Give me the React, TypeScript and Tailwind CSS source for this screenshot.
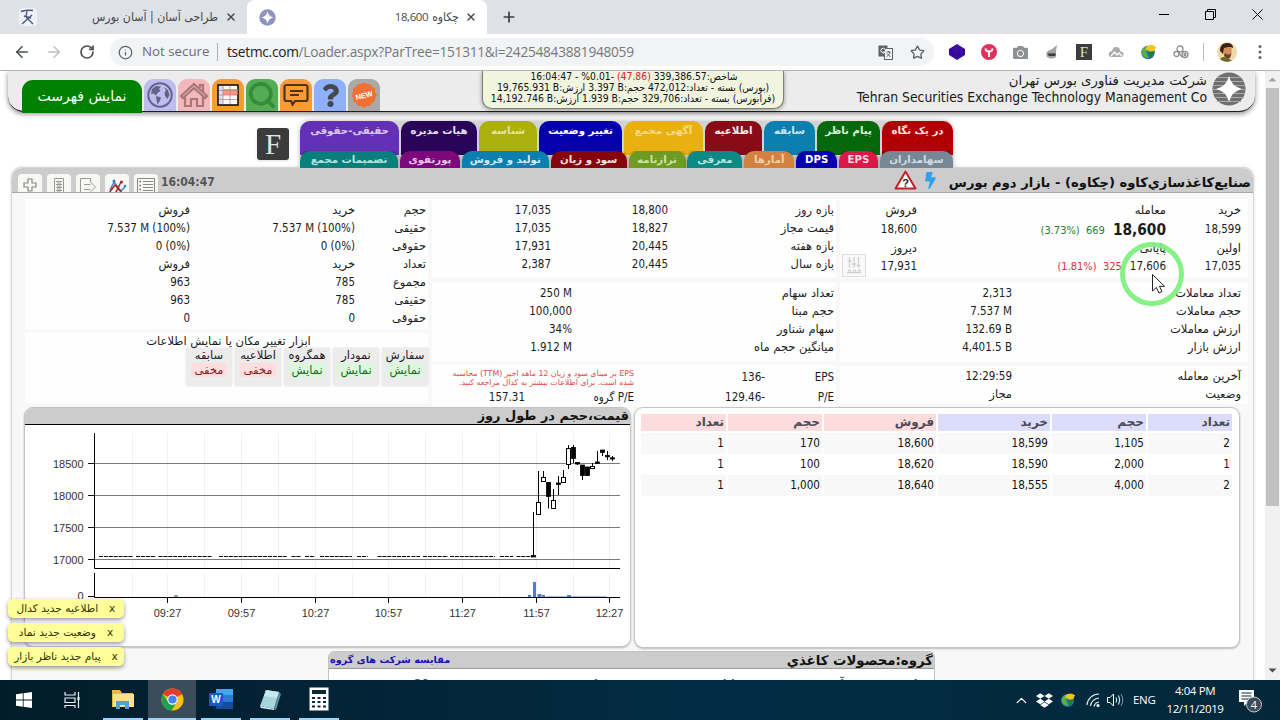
import React from "react";
import { FaGlobeAmericas, FaQuestion, FaDropbox, FaCamera, FaBolt } from "react-icons/fa";
import { ArrowLeft, ArrowRight, RotateCw, Info, Star, Plus, X, Search, ChevronUp } from "lucide-react";

const PAGE = "font-['DejaVu_Sans_Condensed','DejaVu_Sans',sans-serif] [font-stretch:condensed]";
const FA = "font-['DejaVu_Sans',sans-serif] [font-stretch:normal]";
const UI = "font-['Open_Sans','DejaVu_Sans',sans-serif]";

/* ---------- browser chrome ---------- */

function TabStrip() {
  return (
    <div className="flex h-[34px] shrink-0 items-stretch bg-[#dee1e6]">
      <div className="flex w-[247px] items-center pl-[19px] pr-[10px]">
        <svg width="18" height="18" viewBox="0 0 18 18">
          <rect width="18" height="18" rx="4" fill="#eef1f6" />
          <path d="M2 3.500C7 2 11 2 14 2.500M8 3L7 9M13 7L3 16M7 9L14 16M5 8L12 10" fill="none" stroke="#4a5a80" strokeWidth="1.400" />
        </svg>
        <div dir="rtl" className="ml-auto mr-[7px] text-[12.200px] text-[#45494d] font-['DejaVu_Sans_Condensed','DejaVu_Sans',sans-serif] [font-stretch:condensed]">
          طراحی آسان | آسان بورس
        </div>
        <X size={12} strokeWidth={3} color="#45494d" className="shrink-0" />
      </div>
      <div className="flex w-[240px] items-center rounded-t-[8px] bg-white pl-[12px] pr-[10px]">
        <svg width="17" height="17" viewBox="0 0 17 17">
          <circle cx="8.500" cy="8.500" r="8.200" fill="#8e93c0" />
          <path d="M8.500 2.500Q9.500 7.500 14.500 8.500Q9.500 9.500 8.500 14.500Q7.500 9.500 2.500 8.500Q7.500 7.500 8.500 2.500Z" fill="#fff" />
        </svg>
        <div className="ml-auto mr-[6px] flex items-center gap-1 text-[12px] text-[#45494d]">
          <span className="font-['Open_Sans',sans-serif] text-[11.500px] tracking-[-0.4px]">18,600</span>
          <span className="font-['DejaVu_Sans_Condensed','DejaVu_Sans',sans-serif] [font-stretch:condensed]">چکاوه</span>
        </div>
        <X size={12} strokeWidth={3} color="#45494d" className="shrink-0" />
      </div>
      <div className="flex w-[44px] items-center justify-center">
        <Plus size={16} strokeWidth={2.6} color="#3c4043" />
      </div>
      <div className="ml-auto flex items-center gap-[36px] pb-[5px] pr-[17px]">
        <svg width="10" height="11" viewBox="0 0 10 11"><path d="M0 5.500H10" stroke="#000" /></svg>
        <svg width="11" height="11" viewBox="0 0 11 11" fill="none" stroke="#000">
          <path d="M0.500 2.500H8.500V10.500H0.500ZM2.500 2.500V0.500H10.500V8.500H8.500" />
        </svg>
        <svg width="11" height="11" viewBox="0 0 11 11"><path d="M0.500 0.500L10.500 10.500M10.500 0.500L0.500 10.500" stroke="#000" /></svg>
      </div>
    </div>
  );
}

function Toolbar() {
  return (
    <div className="flex h-[36px] shrink-0 items-center bg-white">
      <div className="flex w-[110px] items-center gap-[14px] pl-[13px]">
        <ArrowLeft size={18} strokeWidth={2.2} color="#4d5156" />
        <ArrowRight size={18} strokeWidth={2} color="#bcbfc3" />
        <RotateCw size={16} strokeWidth={2.6} color="#4d5156" className="ml-[2px]" />
      </div>
      <div className={`flex h-[28px] w-[824px] items-center rounded-full bg-[#f1f3f4] pl-[8px] pr-[8px] text-[14px] ${UI}`}>
        <Info size={15} color="#5f6368" />
        <span className="ml-[9px] w-[75px] whitespace-nowrap text-[13.300px] text-[#6a6e73]">Not secure</span>
        <span className="h-[18px] w-px bg-[#a9adb1]" />
        <span className="ml-[9px] whitespace-nowrap text-[13.700px] tracking-[-0.27px] text-[#202124]">
          tsetmc.com<span className="text-[#74787c]">/Loader.aspx?ParTree=151311&amp;i=24254843881948059</span>
        </span>
        <svg className="ml-auto" width="15" height="15" viewBox="0 0 15 15">
          <rect x="0.500" y="0.500" width="9" height="11" fill="#5f6368" />
          <rect x="6.500" y="3.500" width="8" height="11" fill="#f1f3f4" stroke="#5f6368" />
          <path d="M7 4.200A2.300 2.300 0 1 0 7 7H5" stroke="#fff" fill="none" />
          <path d="M8.500 7H12.500M10.500 6V7M12 7C11.500 9.500 10 10.500 8.500 11.500M9 8.500L12.500 12" stroke="#5f6368" fill="none" />
        </svg>
        <Star size={15} color="#5f6368" strokeWidth={2.2} className="ml-[17px] mr-[1px]" />
      </div>
      <div className="ml-[15px] flex items-center">
        <div className="flex items-center gap-[16px]">
          <svg width="16" height="16" viewBox="0 0 16 16"><path d="M8 0L16 5V11L8 16L0 11V5Z" fill="#3c0ca3" /><path d="M0 5L8 10L16 5M0 8L8 13L16 8" stroke="#23087c" fill="none" strokeWidth="0.800" /></svg>
          <svg width="16" height="16" viewBox="0 0 16 16"><circle cx="8" cy="8" r="8" fill="#e0315e" /><path d="M4.500 4.500Q4.500 7.500 8 7.500Q11.500 7.500 11.500 4.500M8 7.500V13" stroke="#fff" strokeWidth="1.800" fill="none" /></svg>
          <FaCamera size={15} color="#8f9295" />
          <svg width="16" height="16" viewBox="0 0 16 16"><path d="M13 1L8 5L4 7Q1 9 3 13Q8 16 12 13L12 7Z" fill="#a3a3a3" /><path d="M3.500 9.500H12L11 12H5Z" fill="#3c3c3c" /></svg>
          <span className="flex h-[16px] w-[16px] items-center justify-center bg-[#3d3d3d] text-[15px] leading-none text-[#ddd] font-['Liberation_Serif',serif]">F</span>
          <svg width="16" height="12" viewBox="0 0 16 12"><path d="M3 11Q0 10 1 7Q2 5 4 5Q5 1 8 1Q12 1 12 5Q16 6 15.500 9Q15 11 13 11Z" fill="#aaa" /><path d="M3 10L6.500 6L9 9L11 7L14 10" fill="none" stroke="#fff" strokeWidth="1.400" /></svg>
          <svg width="17" height="16" viewBox="0 0 17 16"><circle cx="8" cy="8.500" r="6.800" fill="#2773c4" /><path d="M2 6Q5 1 9 3L6 8L9 14Q2 14 1.500 8Z" fill="#58b33a" /><path d="M6 3Q11 -1 16 3L13 9L11 10L9 7L6 6Z" fill="#f0c419" /><path d="M8 8L15 7L10.500 15Z" fill="#1e7d2f" /></svg>
          <svg width="16" height="14" viewBox="0 0 16 14" fill="none" stroke="#8f8f8f" strokeWidth="1.300"><circle cx="7" cy="4" r="3" /><circle cx="3.500" cy="9" r="2.500" /><circle cx="12" cy="9.500" r="3" /><circle cx="12" cy="9.500" r="1" /><path d="M5 7L9 12" /></svg>
        </div>
        <span className="ml-[14px] h-[18px] w-px bg-[#babdc0]" />
        <svg className="ml-[13px]" width="20" height="20" viewBox="0 0 20 20">
          <clipPath id="avatar"><circle cx="10" cy="10" r="10" /></clipPath>
          <g clipPath="url(#avatar)">
            <rect width="20" height="20" fill="#efd9a6" />
            <path d="M3 9Q3 1 10 1Q16 1 16 6L13 5L8 6L6 12Z" fill="#3a2418" />
            <path d="M7 6L14.500 5V11Q14 16 11 16Q8 15 6 11Z" fill="#d58e5c" />
            <path d="M8 11Q11 14 14.500 11L13 16Q10 18 7 14Z" fill="#6b3f26" />
            <path d="M2 20Q3 15 7 15L12 17Q15 18 16 20Z" fill="#6b6a2a" />
          </g>
        </svg>
        <svg className="ml-[21px]" width="4" height="16" viewBox="0 0 4 16" fill="#5f6368"><circle cx="2" cy="2.500" r="1.500" /><circle cx="2" cy="8" r="1.500" /><circle cx="2" cy="13.500" r="1.500" /></svg>
      </div>
    </div>
  );
}

/* ---------- site header ---------- */

function MenuIcon({ bg, children }: { bg: string; children: React.ReactNode }) {
  return <div className={`flex h-[32px] w-[32px] items-center justify-center rounded-t-[9px] ${bg}`}>{children}</div>;
}

function SiteHeader() {
  return (
    <header className="mx-[8px] flex h-[41px] w-[1247px] shrink-0 rounded-b-[16px] border-b border-[#1d1d1d] bg-[#ececec] shadow-[0_2px_5px_rgba(0,0,0,0.45)]">
      <div className="flex items-end gap-[2px] pl-[14px]">
        <div className={`-mb-[2px] flex h-[33px] w-[120px] items-center justify-center rounded-t-[11px] bg-[#008000] text-[14px] text-white ${FA}`}>نمایش فهرست</div>
        <MenuIcon bg="bg-[#bdbdf0]">
          <svg width="26" height="26" viewBox="0 0 26 26">
            <circle cx="13" cy="13" r="11.700" fill="none" stroke="#63638a" strokeWidth="2" />
            <path d="M5 7L9 4L14 4.500L12 7L13.500 9L10.500 11L9 13.500L6.500 11.500L4 12ZM9 14L14 15.500L13 18.500L10.500 22.500L9.500 18ZM17 5L21 8L22.500 13L20.500 17L18 14L17.500 10.500L19 8.500Z" fill="#63638a" />
          </svg>
        </MenuIcon>
        <MenuIcon bg="bg-[#f2b8bb]">
          <svg width="30" height="28" viewBox="0 0 30 28" fill="none" stroke="#aa7777" strokeWidth="2.200">
            <path d="M2 15L15 3L28 15L26 17L15 7L4 17ZM21 7V4H24V11M6 16V25H12V18H18V25H24V16" />
          </svg>
        </MenuIcon>
        <MenuIcon bg="bg-[#fb9a33]">
          <svg width="22" height="22" viewBox="0 0 22 22"><rect x="1" y="1" width="20" height="20" fill="#fbf8f8" stroke="#111" strokeWidth="1.600" /><path d="M2 2H6V20H2Z" fill="#dcdcf0" /><rect x="6" y="5" width="14.500" height="6" fill="#f9967c" /><path d="M2 6.500H20M2 11H20M2 15.500H20M6 2V20M13 2V20" stroke="#b58a8a" strokeWidth="0.800" /></svg>
        </MenuIcon>
        <MenuIcon bg="bg-[#52ad55]"><Search size={30} strokeWidth={3} color="#388a3c" /></MenuIcon>
        <MenuIcon bg="bg-[#fb9a33]">
          <svg width="26" height="24" viewBox="0 0 26 24" fill="none" stroke="#4d3418" strokeWidth="2.200"><path d="M3.500 2H22.500Q24.500 2 24.500 4V16Q24.500 18 22.500 18H12L9.500 21.500L8 18H3.500Q1.500 18 1.500 16V4Q1.500 2 3.500 2ZM7 8H20M7 12H16" /></svg>
        </MenuIcon>
        <MenuIcon bg="bg-[#8fb0fa]"><FaQuestion size={23} color="#44484f" /></MenuIcon>
        <MenuIcon bg="bg-[#aaa9a7]">
          <svg width="28" height="28" viewBox="0 0 28 28">
            <path d="M14 1.500L17 3L20 3L22 5.500L25 7.500L25 11L27 14L25 17L25 20L22 22L20 25L17 25L14 27L11 25L8 25L6 22L3 20L3 17L1.500 14L3 11L3 7.500L6 5.500L8 3L11 3Z" fill="#ee7135" />
            <text x="14" y="17" fontSize="7.500" fontWeight="bold" fill="#fff" textAnchor="middle" transform="rotate(-14 14 14)" fontFamily="Liberation Sans, sans-serif">NEW</text>
          </svg>
        </MenuIcon>
      </div>
      <div dir="rtl" className="ml-[102px] h-[38px] w-[302px] whitespace-nowrap rounded-b-[10px] border border-t-0 border-[#7e7f6c] bg-[#f1f4de] text-center text-[10.300px] leading-[11px] text-[#111] shadow-[0_1px_4px_rgba(0,0,0,0.4)]">
        <div className="pl-[2px]">شاخص:<bdi dir="ltr">339,386.57</bdi> <bdi dir="ltr" className="text-[#d8202c]">(47.86)</bdi> <bdi dir="ltr">16:04:47 - %0.01-</bdi></div>
        <div>(بورس) بسته - تعداد:472,012 حجم:<bdi>3.397 B</bdi> ارزش:<bdi>19,765.931 B</bdi></div>
        <div>(فرابورس) بسته - تعداد:329,706 حجم:<bdi>1.939 B</bdi> ارزش:<bdi>14,192.746 B</bdi></div>
      </div>
      <div className="ml-auto mr-[9px] flex gap-[5px]">
        <div className="whitespace-nowrap text-right text-[#1a1a1a]">
          <div dir="rtl" className={`h-[18px] text-[13.300px] leading-[19px] ${FA}`}>شرکت مدیریت فناوری بورس تهران</div>
          <div className="text-[13.800px] leading-[17px]">Tehran Securities Exchange Technology Management Co</div>
        </div>
        <svg className="mt-px" width="34" height="34" viewBox="0 0 34 34">
          <circle cx="17" cy="17" r="16.500" fill="#6f6f6f" />
          <path d="M5 5.500H29M2 9.500H32M1 13.500H33M0 17.500H34M1 21.500H33M2 25.500H32M5 29.500H29" stroke="#a9a9a9" strokeWidth="1.200" />
          <path d="M17 4Q19.500 14.500 30 17Q19.500 19.500 17 30Q14.500 19.500 4 17Q14.500 14.500 17 4Z" fill="#fff" />
        </svg>
      </div>
    </header>
  );
}

/* ---------- section tabs ---------- */

const TOP_TABS = [
  ["w-[99px] bg-[#6430b8] text-[#d8c8f0]", "حقیقی-حقوقی"],
  ["w-[76px] bg-[#2a0459] text-[#e6e0ee]", "هیات مدیره"],
  ["w-[58px] bg-[#adaf0a] text-[#e4e4a2]", "شناسه"],
  ["w-[83px] bg-[#0500ad] text-white", "تغییر وضعیت"],
  ["w-[79px] bg-[#e9b011] text-[#f6da87]", "آگهی مجمع"],
  ["w-[57px] bg-[#8b0a18] text-[#f8e8e8]", "اطلاعیه"],
  ["w-[51px] bg-[#0b80b0] text-[#c6e6f3]", "سابقه"],
  ["w-[63px] bg-[#06680a] text-[#dcf0d8]", "پیام ناظر"],
  ["w-[71px] bg-[#b10005] text-[#ffe3e0]", "در یک نگاه"],
];
const LOW_TABS = [
  ["w-[98px] bg-[#087f7c] text-[#b5e2dd]", "تصمیمات مجمع"],
  ["w-[60px] bg-[#7c087c] text-[#e8c0e8]", "پورتفوی"],
  ["w-[87px] bg-[#0b80b0] text-[#cfeaf5]", "تولید و فروش"],
  ["w-[76px] bg-[#86040c] text-[#f7e0e0]", "سود و زیان"],
  ["w-[57px] bg-[#6e9c22] text-[#cfe2a8]", "ترازنامه"],
  ["w-[55px] bg-[#0c8985] text-[#b8e2de]", "معرفی"],
  ["w-[50px] bg-[#d2813f] text-[#f3cfa8]", "آمارها"],
  ["w-[41px] bg-[#0500ad] text-white", "DPS"],
  ["w-[39px] bg-[#dd1748] text-[#ffd9e0]", "EPS"],
  ["w-[73px] bg-[#768896] text-[#d2dbe0]", "سهامداران"],
];

function SectionTabs() {
  return (
    <div className="flex h-[56px] shrink-0 pl-[257px] pt-[9px]">
      <div className="mt-[7px] flex h-[32px] w-[32px] items-center justify-center rounded-[3px] bg-[#3b3b3b] text-[29px] leading-none text-[#e2e2e2] shadow font-['Liberation_Serif',serif]">F</div>
      <div className={`ml-[11px] w-[653px] rounded-t-[10px] bg-[#d3d3d3] text-[10.200px] font-bold shadow-[0_0_5px_rgba(0,0,0,0.3)] ${FA}`}>
        <div className="flex h-[30px] justify-between">
          {TOP_TABS.map(([c, t]) => (
            <div key={t} className={`flex h-[34px] justify-center whitespace-nowrap rounded-t-[10px] pt-[2px] leading-[16px] ${c}`}>{t}</div>
          ))}
        </div>
        <div className="flex h-[17px] justify-between overflow-hidden">
          {LOW_TABS.map(([c, t]) => (
            <div key={t} className={`relative flex h-[24px] justify-center whitespace-nowrap rounded-t-[10px] pt-[1px] leading-[16px] shadow-[0_-1px_3px_rgba(0,0,0,0.3)] ${c}`}>{t}</div>
          ))}
        </div>
      </div>
    </div>
  );
}

/* ---------- title bar of the symbol ---------- */

function ToolButton({ children }: { children: React.ReactNode }) {
  return (
    <div className="flex h-[18px] w-[24px] items-start justify-center overflow-hidden rounded-t-[4px] bg-[#f7f7f4] pt-[4px]">
      <svg width="20" height="18" viewBox="0 0 20 18" fill="none">{children}</svg>
    </div>
  );
}

function TitleBar() {
  return (
    <div className="flex h-[25px] shrink-0 rounded-t-[10px] border-b border-[#a9a9a9] bg-[#cccccc] pl-[6px] pr-[2px]">
      <div className="flex items-end gap-[5px]">
        <ToolButton><path d="M8 1H12V5H16V9H12V13H8V9H4V5H8Z" stroke="#888" strokeWidth="1.200" /></ToolButton>
        <ToolButton><path d="M5.500 0.500H14.500V17M5.500 0.500V17M7 3.500H13M7 6.500H13M7 9.500H13M7 12.500H13M9 3V17M11 3V17" stroke="#999" /></ToolButton>
        <ToolButton><path d="M2.500 0.500H12.500V4L17.500 9L12.500 14M2.500 0.500V17M6 6.500H12.500M6 11.500H12.500" stroke="#999" /></ToolButton>
        <ToolButton>
          <path d="M3 12L7 4L14 13L18 9" stroke="#347fc0" strokeWidth="1.400" /><path d="M2 15L8 7L15 15M8 16L14 4" stroke="#b52026" strokeWidth="1.500" />
          <circle cx="7" cy="3" r="1.500" fill="#347fc0" /><circle cx="14.500" cy="4" r="1.500" fill="#b52026" /><circle cx="18" cy="8" r="1.300" fill="#347fc0" />
        </ToolButton>
        <ToolButton><path d="M1.500 0.500H18.500V17M1.500 0.500V17M7 3.500H17M7 6.500H17M7 9.500H17M7 12.500H17" stroke="#888" /><path d="M3.500 3.500H5M3.500 7.500H5M3.500 11.500H5" stroke="#666" strokeWidth="1.600" /></ToolButton>
      </div>
      <div className="ml-[3px] mt-[7px] text-[12px] font-bold leading-[15px] text-[#555]">16:04:47</div>
      <div className="ml-auto flex">
        <svg className="mt-[2px]" width="23" height="20" viewBox="0 0 23 20"><path d="M11.500 1.500L21.500 18.500H1.500Z" fill="#fff" stroke="#c41c28" strokeWidth="2" strokeLinejoin="round" /><text x="11.500" y="16.500" fontSize="11" fontWeight="bold" textAnchor="middle" fill="#222" fontFamily="Liberation Sans, sans-serif">?</text></svg>
        <FaBolt size={17} color="#31a0f2" className="ml-[5px] mt-[4px]" />
        <div dir="rtl" className={`ml-[10px] mt-[6px] whitespace-nowrap text-[13.100px] font-bold leading-[18px] text-[#111] ${FA}`}>صنایع‌کاغذسازي‌کاوه (چکاوه) - بازار دوم بورس</div>
      </div>
    </div>
  );
}

/* ---------- data boxes (right to left) ---------- */

const CARD = "bg-[#fefefe] whitespace-nowrap";
const isPersian = (c: React.ReactNode) => typeof c === "string" && /[\u0600-\u06ff]/.test(c);

function Cols({ cols, h, cells }: { cols: string; h: string; cells: React.ReactNode[] }) {
  return (
    <div className={`grid items-center ${h} ${cols}`}>
      {cells.map((c, i) => (
        <div key={i} className={isPersian(c) ? `text-right ${FA}` : "text-right"}><bdi>{c}</bdi></div>
      ))}
    </div>
  );
}

function QuoteColumn() {
  const quote = "grid-cols-[75px_249px_1fr]";
  const totals = "grid-cols-[229px_1fr]";
  return (
    <div className="flex w-[408px] flex-col gap-[4px]">
      <div className={`${CARD} relative h-[79px] pr-[7px] pt-[3px]`}>
        <Cols cols={quote} h="h-[18px]" cells={["خرید", "معامله", "فروش"]} />
        <Cols
          cols={quote}
          h="h-[20px]"
          cells={[
            "18,599",
            <span dir="ltr" className="inline-flex items-center align-top">
              <span className="pt-[2px] text-[11px] text-[#2b7a35]">(3.73%)&nbsp; 669</span>
              <b className="ml-[8px] text-[15.300px] leading-[18px]">18,600</b>
            </span>,
            "18,600",
          ]}
        />
        <Cols cols={quote} h="h-[18px]" cells={["اولین", "پایانی", "دیروز"]} />
        <Cols
          cols={quote}
          h="h-[18px]"
          cells={[
            "17,035",
            <span dir="ltr"><span className="mr-[8px] text-[11px] text-[#e1303a]">(1.81%)&nbsp; 325</span>17,606</span>,
            "17,931",
          ]}
        />
        <div className="absolute left-[2px] top-[55px] flex h-[23px] w-[24px] items-center justify-center border border-[#dcdcdc] bg-[#fafafa]">
          <svg width="16" height="17" viewBox="0 0 16 17" fill="none" stroke="#cfcfcf"><path d="M3.500 0V11M8 0V11M12.500 0V11M1.500 4H5.500M6 7H10M10.500 8.500H14.500M2 13.500H5M7 13.500H10M12 13.500H15M1 15.500H15" strokeWidth="1.300" /></svg>
        </div>
      </div>
      <div className={`${CARD} h-[80px] pr-[7px] pt-[3px]`}>
        <Cols cols={totals} h="h-[18px]" cells={["تعداد معاملات", "2,313"]} />
        <Cols cols={totals} h="h-[18px]" cells={["حجم معاملات", "7.537 M"]} />
        <Cols cols={totals} h="h-[18px]" cells={["ارزش معاملات", "132.69 B"]} />
        <Cols cols={totals} h="h-[18px]" cells={["ارزش بازار", "4,401.5 B"]} />
      </div>
      <div className={`${CARD} h-[38px] pr-[7px] pt-[1px]`}>
        <Cols cols={totals} h="h-[19px]" cells={["آخرین معامله", "12:29:59"]} />
        <Cols cols={totals} h="h-[17px]" cells={["وضعیت", "مجاز"]} />
      </div>
    </div>
  );
}

function RangeColumn() {
  const range = "grid-cols-[166px_117px_1fr]";
  const shares = "grid-cols-[262px_1fr]";
  return (
    <div className="flex w-[404px] flex-col gap-[4px]">
      <div className={`${CARD} h-[79px] pr-[2px] pt-[3px]`}>
        <Cols cols={range} h="h-[18px]" cells={["بازه روز", "18,800", "17,035"]} />
        <Cols cols={range} h="h-[18px]" cells={["قیمت مجاز", "18,827", "17,035"]} />
        <Cols cols={range} h="h-[18px]" cells={["بازه هفته", "20,445", "17,931"]} />
        <Cols cols={range} h="h-[18px]" cells={["بازه سال", "20,445", "2,387"]} />
      </div>
      <div className={`${CARD} h-[80px] pr-[2px] pt-[3px]`}>
        <Cols cols={shares} h="h-[18px]" cells={["تعداد سهام", "250 M"]} />
        <Cols cols={shares} h="h-[18px]" cells={["حجم مبنا", "100,000"]} />
        <Cols cols={shares} h="h-[18px]" cells={["سهام شناور", "34%"]} />
        <Cols cols={shares} h="h-[18px]" cells={["میانگین حجم ماه", "1.912 M"]} />
      </div>
      <div className={`${CARD} h-[42px] pr-[2px] pt-[3px]`}>
        <div className="grid h-[20px] grid-cols-[69px_131px_1fr] items-center">
          <span>EPS</span>
          <span dir="ltr" className="text-right">136-</span>
          <span className={`text-[7.850px] leading-[9px] text-[#e04a4a] ${FA}`}>
            EPS بر مبنای سود و زیان 12 ماهه اخیر (TTM) محاسبه<br />شده است. برای اطلاعات بیشتر به کدال مراجعه کنید.
          </span>
        </div>
        <div className="grid h-[20px] grid-cols-[69px_131px_109px_1fr] items-center">
          <span>P/E</span>
          <span dir="ltr" className="text-right">129.46-</span>
          <span>P/E گروه</span>
          <span>157.31</span>
        </div>
      </div>
    </div>
  );
}

const TOOLS = [
  ["سفارش", "نمایش", "bg-[#dcf8dc] text-[#1d6a24]"],
  ["نمودار", "نمایش", "bg-[#dcf8dc] text-[#1d6a24]"],
  ["همگروه", "نمایش", "bg-[#dcf8dc] text-[#1d6a24]"],
  ["اطلاعیه", "مخفی", "bg-[#fddede] text-[#8b1f22]"],
  ["سابقه", "مخفی", "bg-[#fddede] text-[#8b1f22]"],
];

function ClientColumn() {
  const cols = "grid-cols-[71px_165px_1fr]";
  const rows = [
    ["حجم", "خرید", "فروش"],
    ["حقیقی", "7.537 M (100%)", "7.537 M (100%)"],
    ["حقوقی", "0 (0%)", "0 (0%)"],
    ["تعداد", "خرید", "فروش"],
    ["مجموع", "785", "963"],
    ["حقیقی", "785", "963"],
    ["حقوقی", "0", "0"],
  ];
  return (
    <div className="flex w-[403px] flex-col gap-[4px]">
      <div className={`${CARD} h-[130px] pr-[2px] pt-[3px]`}>
        {rows.map((r, i) => (
          <Cols key={i} cols={cols} h="h-[18px]" cells={r.map((c) => (isPersian(c) ? c : <span dir="ltr">{c}</span>))} />
        ))}
      </div>
      <div className={`${CARD} h-[70px] ${FA}`}>
        <div className="h-[15px] pl-[4px] text-center leading-[16px]">ابزار تغییر مکان یا نمایش اطلاعات</div>
        <div className="flex gap-[3px]">
          {TOOLS.map(([a, b, c]) => (
            <div key={a} className="h-[38px] w-[46px] bg-[#ececec] pt-[1px] text-center leading-[14px] shadow-[0_0_2px_rgba(0,0,0,0.12)]">
              <div className="h-[14px] leading-[13px]">{a}</div>
              <div className={`mx-[5px] ${c}`}>{b}</div>
            </div>
          ))}
        </div>
      </div>
    </div>
  );
}

/* ---------- intraday chart ---------- */

const FLAT = [[99, 133], [136, 156], [158.5, 212], [219, 287], [291.5, 301], [305, 315], [320, 352], [357, 367.5], [377.5, 410], [411.5, 420], [423, 448], [450, 495], [500, 513], [516.5, 534]];
// x, wick top, wick bottom, body top, body bottom, hollow
const CANDLES: [number, number, number, number, number, boolean][] = [
  [533.5, 512, 556, 555.5, 557, false],
  [538.5, 471, 502, 502.5, 514.5, true],
  [543.5, 471, 477, 477.5, 481.5, true],
  [548.5, 482, 508.5, 482.5, 496.5, false],
  [553.5, 489, 500, 500.5, 508.5, true],
  [558.5, 476, 495, 483, 484.5, false],
  [563.5, 470, 477, 477.5, 482.5, true],
  [568.5, 445, 469, 448.5, 464.5, true],
  [573.5, 445, 463, 447.5, 458.5, false],
  [577.5, 462, 465, 462.5, 464, false],
  [582.5, 465, 480, 465, 475.5, false],
  [587.5, 467, 476, 467, 475.5, false],
  [592.5, 463, 467, 466.5, 468.5, true],
  [597.5, 451, 464, 462, 463.5, false],
  [602.5, 450, 456, 450, 452.5, false],
  [607.5, 451, 460, 455.5, 456.8, false],
  [612.5, 456, 461, 457.8, 459, false],
];
const TIMES: [number, string][] = [[167.5, "09:27"], [241.5, "09:57"], [315.5, "10:27"], [388.5, "10:57"], [462.5, "11:27"], [536.5, "11:57"], [609.5, "12:27"]];
const PRICES: [number, string][] = [[463.5, "18500"], [495.5, "18000"], [527.5, "17500"], [559.5, "17000"]];

function Chart() {
  return (
    <svg width="606" height="221" viewBox="25 425 606 221" className="block" fontFamily="Liberation Sans, sans-serif" fontSize="11" fill="#333">
      {[132.5, 167.5, 204.5, 241.5, 278.5, 315.5, 352.5, 388.5, 425.5, 462.5, 499.5, 536.5, 573.5, 609.5].map((x) => (
        <path key={x} d={`M${x} 433V568M${x} 574V597`} stroke="#f0f0f0" />
      ))}
      {PRICES.map(([y, t]) => (
        <g key={t}>
          <path d={`M95 ${y}H620`} stroke="#7c7c7c" />
          <path d={`M88 ${y}H95`} stroke="#111" />
          <text x="83.500" y={y + 4} textAnchor="end">{t}</text>
        </g>
      ))}
      <path d="M94.500 433V568.500H620M94.500 573V597.500H620M88 596.500H95" fill="none" stroke="#000" />
      <text x="83.500" y="600" textAnchor="end">0</text>
      {TIMES.map(([x, t]) => (
        <g key={t}>
          <path d={`M${x} 597V603`} stroke="#000" />
          <text x={x} y="617" textAnchor="middle">{t}</text>
        </g>
      ))}
      {FLAT.map(([a, b]) => (
        <path key={a} d={`M${a} 556.5H${b}`} stroke="#000" strokeDasharray="4 0.9" />
      ))}
      {CANDLES.map(([x, wt, wb, t, b, hollow]) => (
        <g key={x} stroke="#000">
          <path d={`M${x} ${wt}V${wb}`} />
          <rect x={x - 2} y={t} width="4" height={b - t} fill={hollow ? "#fff" : "#000"} strokeWidth={hollow ? 1 : 0.8} />
        </g>
      ))}
      <g fill="#4c80c6">
        <rect x="533" y="582" width="3" height="15" />
        <rect x="528" y="595" width="3" height="2" />
        <rect x="537.500" y="594" width="4" height="3" />
        <rect x="542" y="595" width="3" height="2" />
        <rect x="546" y="596" width="60" height="1" opacity="0.5" />
        <rect x="567" y="595" width="4" height="2" />
        <rect x="174" y="595" width="4" height="2" opacity="0.7" />
      </g>
    </svg>
  );
}

function ChartPanel() {
  return (
    <div className="h-[240px] w-[607px] overflow-hidden rounded-[9px] border border-[#c4c4c4] bg-white shadow-[0_1px_2px_rgba(0,0,0,0.25)]">
      <div dir="rtl" className={`h-[17px] border-b border-black bg-[#cccccc] pr-[1px] text-[12.900px] font-bold leading-[16px] text-[#111] ${FA}`}>قیمت،حجم در طول روز</div>
      <Chart />
    </div>
  );
}

/* ---------- order book ---------- */

const BOOK = [
  ["2", "1,105", "18,599", "18,600", "170", "1"],
  ["1", "2,000", "18,590", "18,620", "100", "1"],
  ["2", "4,000", "18,555", "18,640", "1,000", "1"],
];

function OrderBook() {
  const cols = "grid grid-cols-[84px_94px_112px_112px_94px_85px] gap-[2px]";
  return (
    <div dir="rtl" className="h-[241px] w-[606px] rounded-[9px] border border-[#c4c4c4] bg-white pr-[7px] pt-[6px] shadow-[0_1px_2px_rgba(0,0,0,0.25)]">
      <div className={`${cols} mb-[2px] h-[17px] text-[12px] font-bold leading-[17px] text-[#4c4c58] ${FA}`}>
        {["تعداد", "حجم", "خرید", "فروش", "حجم", "تعداد"].map((t, i) => (
          <div key={i} className={`pr-[2px] ${i < 3 ? "bg-[#dcdcfc]" : "bg-[#fcdcdc]"}`}>{t}</div>
        ))}
      </div>
      {BOOK.map((r, i) => (
        <div key={i} className={`${cols} h-[21px] text-[11.600px] leading-[21px] text-[#111]`}>
          {r.map((c, j) => (
            <div key={j} className={`pr-[2px] ${i % 2 ? "bg-white" : "bg-[#f8f8f8]"}`}>{c}</div>
          ))}
        </div>
      ))}
    </div>
  );
}

function GroupPanel() {
  return (
    <div className="ml-[316px] mt-[3px] w-[607px] shrink-0 overflow-hidden rounded-t-[6px] border border-[#c4c4c4] bg-white">
      <div className={`flex h-[17px] items-center justify-between border-b border-[#999] bg-[#cccccc] pl-[1px] pr-px font-bold ${FA}`}>
        <span className="text-[9.700px] text-[#1a12b4]">مقایسه شرکت های گروه</span>
        <span dir="rtl" className="text-[13.300px] leading-[15px] text-[#111]">گروه:محصولات کاغذي</span>
      </div>
      <div dir="rtl" className="grid h-[40px] grid-cols-[85px_105px_125px_105px_80px_1fr] pr-[5px] pt-[6px] text-[12px] font-bold text-[#4c4c58]">
        <span>نماد</span><span>آخرین</span><span>پایانی</span><span>تعداد</span><span>حجم</span><span>20</span>
      </div>
    </div>
  );
}

/* ---------- overlays ---------- */

function Toasts() {
  return (
    <div className={`absolute left-[8px] top-[599px] flex w-[116px] flex-col gap-[5px] text-[10.600px] text-[#333300] ${FA}`}>
      {["اطلاعیه جدید کدال", "وضعیت جدید نماد", "پیام جدید ناظر بازار"].map((t) => (
        <div key={t} dir="rtl" className="flex h-[19px] items-center justify-center gap-[11px] whitespace-nowrap rounded-[5px] bg-[#ffff99] shadow-[0_2px_4px_rgba(0,0,0,0.4)]">
          <span>x</span><span>{t}</span>
        </div>
      ))}
    </div>
  );
}

function Pointer() {
  return (
    <svg className="absolute left-[1119px] top-[241px]" width="66" height="66" viewBox="0 0 66 66">
      <circle cx="33" cy="33" r="29.500" fill="none" stroke="#7df07d" strokeWidth="5" opacity="0.92" />
      <path d="M33.500 33.500V50L37.300 46.500L40 52L43 50.600L40.500 45.300H45.500Z" fill="#fff" stroke="#222" />
    </svg>
  );
}

/* ---------- taskbar ---------- */

function TaskItem({ w, active, children }: { w: string; active?: boolean; children: React.ReactNode }) {
  return (
    <div className={`flex h-[40px] items-center justify-center border-b-2 border-[#9ed3f5] ${w} ${active ? "bg-[#3b4d59]" : ""}`}>{children}</div>
  );
}

function Taskbar() {
  return (
    <div className={`flex h-[40px] shrink-0 items-center bg-[linear-gradient(90deg,#021d2a_0%,#032438_30%,#022c44_55%,#03283a_100%)] text-white ${UI}`}>
      <svg className="ml-[16px]" width="16" height="16" viewBox="0 0 16 16" fill="#fff"><path d="M0 2.300L6.800 1.300V7.600H0ZM7.600 1.200L16 0V7.600H7.600ZM0 8.400H6.800V14.700L0 13.700ZM7.600 8.400H16V16L7.600 14.800Z" /></svg>
      <svg className="ml-[32px]" width="17" height="16" viewBox="0 0 17 16" fill="none" stroke="#e8eef2" strokeWidth="1.200"><path d="M1 0V3H11V0M1 6H11V10.500H1ZM1 16V13.500H11V16M14.500 0V16" /><rect x="13.500" y="5" width="2" height="3" fill="#fff" stroke="none" /></svg>
      <div className="ml-[22px] flex gap-[5px]">
        <TaskItem w="w-[40px]">
          <svg width="24" height="20" viewBox="0 0 24 20"><path d="M1 1H9L11 4H22V18H1Z" fill="#e9b93d" /><path d="M2 5H23V18H2Z" fill="#fbe18a" /><path d="M5 20V12H18V20H14V16H9V20Z" fill="#4aa4de" /></svg>
        </TaskItem>
        <TaskItem w="w-[48px]" active>
          <svg width="23" height="23" viewBox="0 0 24 24"><circle cx="12" cy="12" r="11.500" fill="#fbc116" /><path d="M12 12L2 6.300A11.500 11.500 0 0 1 22 6.300Z" fill="#e33b2e" /><path d="M12 .5A11.500 11.500 0 0 1 22 6.500H12Z" fill="#e33b2e" /><path d="M2 6.300A11.500 11.500 0 0 0 11 23.500L16.500 14.500L7.500 14.500Z" fill="#1fa04f" /><circle cx="12" cy="12" r="5.400" fill="#fff" /><circle cx="12" cy="12" r="4.300" fill="#4384ee" /></svg>
        </TaskItem>
        <TaskItem w="w-[40px]">
          <svg width="25" height="22" viewBox="0 0 25 22"><rect x="7" y="1" width="17" height="20" rx="1.500" fill="#2b7cd3" /><rect x="7" y="1" width="17" height="6" fill="#41a5ee" /><rect x="7" y="14" width="17" height="7" fill="#134d9c" /><rect x="0" y="5" width="14" height="13" rx="1" fill="#185abd" /><text x="7" y="15" fontSize="10" fontWeight="bold" fill="#fff" textAnchor="middle" fontFamily="Liberation Sans, sans-serif">W</text></svg>
        </TaskItem>
        <div className="pl-[4px]"><TaskItem w="w-[40px]">
          <svg width="24" height="24" viewBox="0 0 24 24"><path d="M8 3L21 5L16 22L2 19Z" fill="#a8d4dc" /><path d="M8 3L21 5L19 11L6 9Z" fill="#c9e8ed" /><path d="M21 5L23 7L18 23L16 22Z" fill="#5f8d98" /><path d="M2 19L16 22V23L3 21Z" fill="#e9f4f5" /></svg>
        </TaskItem></div>
        <div className="pl-[4px]"><TaskItem w="w-[40px]">
          <svg width="20" height="24" viewBox="0 0 20 24"><rect x="0.500" y="0.500" width="19" height="23" fill="#fff" /><path d="M3 3H17V7H3Z" fill="#0a2a3c" /><path d="M3 11H17M3 15H17M3 19.500H17" stroke="#0a2a3c" strokeWidth="2" strokeDasharray="3 2.500" /></svg>
        </TaskItem></div>
      </div>
      <div className="ml-auto flex items-center">
        <ChevronUp size={17} color="#fff" strokeWidth={1.800} />
        <FaDropbox className="ml-[6px]" size={17} color="#fff" />
        <svg className="ml-[7px]" width="16" height="16" viewBox="0 0 17 16"><circle cx="8" cy="8.500" r="6.800" fill="#2773c4" /><path d="M2 6Q5 1 9 3L6 8L9 14Q2 14 1.500 8Z" fill="#58b33a" /><path d="M6 3Q11 -1 16 3L13 9L11 10L9 7L6 6Z" fill="#f0c419" /><path d="M8 8L15 7L10.500 15Z" fill="#1e7d2f" /></svg>
        <svg className="ml-[10px]" width="14" height="14" viewBox="0 0 14 14" fill="none" stroke="#e6edf0" strokeWidth="1.200"><path d="M1 12A12 12 0 0 1 13 1M4.500 13A9 9 0 0 1 13 5M8 13.500A6 6 0 0 1 13 9" /><circle cx="12" cy="12.500" r="1" fill="#fff" /></svg>
        <svg className="ml-[7px]" width="17" height="14" viewBox="0 0 17 14" fill="none" stroke="#fff"><path d="M0.500 4.500H3L6.500 1V13L3 9.500H0.500ZM9 4.500Q10.500 7 9 9.500M11.500 2.500Q14 7 11.500 11.500" /><path d="M14 1Q17.500 7 14 13" stroke="#8195a0" /></svg>
        <span className="ml-[9px] w-[24px] text-[11.500px] tracking-[-0.3px]">ENG</span>
        <div className="ml-[8px] w-[60px] whitespace-nowrap text-center text-[11.500px] leading-[18px] tracking-[-0.4px]">
          <div>4:04 PM</div>
          <div>12/11/2019</div>
        </div>
        <svg className="ml-[13px] mr-[16px]" width="26" height="26" viewBox="0 0 26 26">
          <path d="M1 3H16V15H10L6 19V15H1Z" fill="#fff" /><path d="M3.500 6H13.500M3.500 9H13.500M3.500 12H13.500" stroke="#0a2a3c" />
          <circle cx="16" cy="17.500" r="7.500" fill="#3c4c55" stroke="#c3ccd1" /><text x="16" y="21.500" fontSize="11" fill="#fff" textAnchor="middle" fontFamily="Open Sans, sans-serif">4</text>
        </svg>
      </div>
    </div>
  );
}

function Scrollbar() {
  return (
    <div className="flex w-[15px] shrink-0 flex-col items-center bg-[#f1f1f1]">
      <svg className="shrink-0" width="15" height="17" viewBox="0 0 15 17"><path d="M3.500 10.500L7.500 6.500L11.500 10.500Z" fill="#a3a3a3" /></svg>
      <div className="h-[418px] w-[13px] shrink-0 bg-[#c1c1c1]" />
      <svg className="mt-auto shrink-0" width="15" height="18" viewBox="0 0 15 18"><path d="M3.500 6.500L7.500 10.500L11.500 6.500Z" fill="#505050" /></svg>
    </div>
  );
}

export default function App() {
  return (
    <div className="relative flex h-[720px] w-[1280px] flex-col overflow-hidden bg-white">
      <TabStrip />
      <Toolbar />
      <div className={`flex h-[610px] shrink-0 border-t border-[#b4b4b4] ${PAGE}`}>
        <main className="flex h-[609px] w-[1265px] flex-col overflow-hidden">
          <SiteHeader />
          <SectionTabs />
          <section className="mx-[12px] flex h-[513px] shrink-0 flex-col overflow-hidden rounded-t-[10px] bg-[#f8f8f8] shadow-[0_0_0_1px_#d6d6d6,0_0_3px_1px_rgba(0,0,0,0.15)]">
            <TitleBar />
            <div dir="rtl" className="flex h-[214px] shrink-0 gap-[4px] pr-[5px] pt-[6px] text-[11.500px] text-[#1c1c1c]">
              <QuoteColumn />
              <RangeColumn />
              <ClientColumn />
            </div>
            <div className="flex shrink-0 gap-[3px] pl-[12px]">
              <ChartPanel />
              <OrderBook />
            </div>
            <GroupPanel />
          </section>
        </main>
        <Scrollbar />
      </div>
      <Taskbar />
      <Toasts />
      <Pointer />
    </div>
  );
}
